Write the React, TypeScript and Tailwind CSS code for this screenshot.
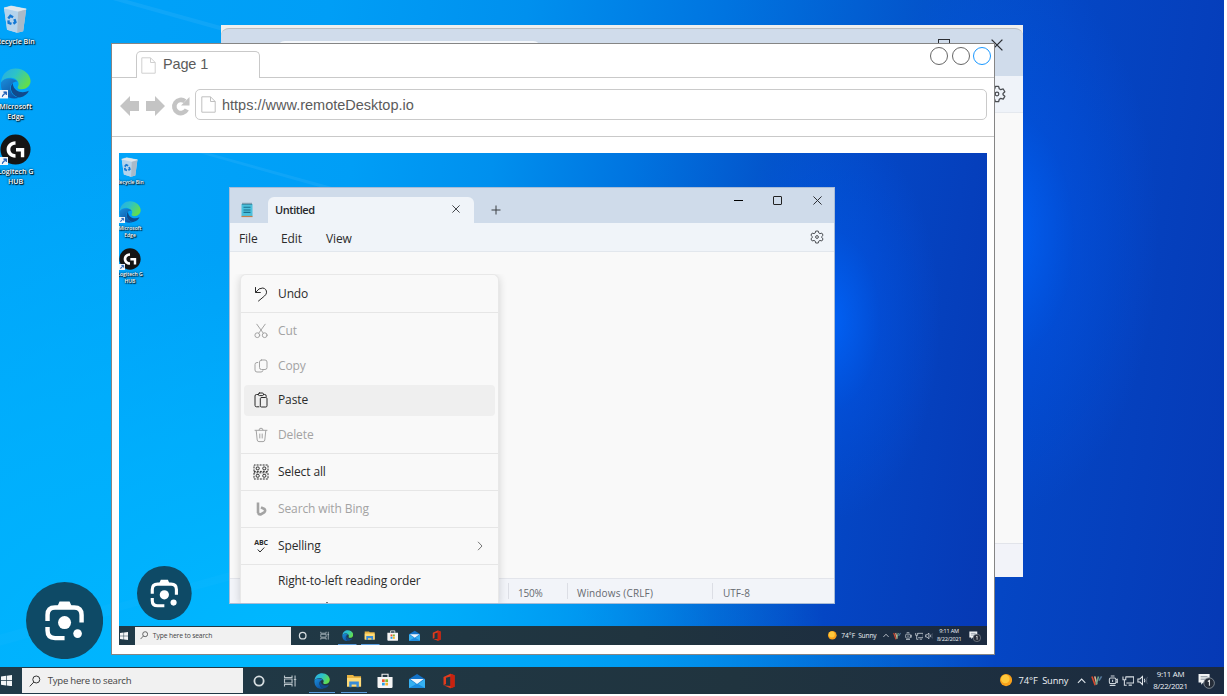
import type { ReactNode } from "react";

/* Sizes inside <Desktop> are in em, so one font size scales the whole desktop. */

function RecycleBin() {
  return (
    <svg viewBox="0 0 24 28" className="block h-[2em] w-[1.72em]">
      <path d="M1 3 L8 1 L23 4 L20 26 L14 27.5 L4 24.5 Z" fill="#c9d9e6" />
      <path d="M1 3 L15 6 L14 27.5 L4 24.5 Z" fill="#b4d3ec" />
      <path d="M15 6 L23 4 L20 26 L14 27.5 Z" fill="#a9bac9" />
      <path d="M1 3 L8 1 L23 4 L15 6.2 Z" fill="#dfe6eb" stroke="#e6edf2" strokeWidth="0.6" />
      <g fill="none" stroke="#1478d4" strokeWidth="2.4">
        <path d="M5.2 13.5 L7.3 10.8 L10 12.2" />
        <path d="M11.3 14 L12.3 17 L10.3 18.6" />
        <path d="M8.4 18.8 L5.6 17.8 L5.4 15.2" />
      </g>
    </svg>
  );
}

function EdgeLogo({ id, className }: { id: string; className: string }) {
  return (
    <svg viewBox="0 0 32 32" className={className}>
      <defs>
        <linearGradient id={id + "a"} x1="0" y1="0" x2="1" y2="0.5">
          <stop offset="0" stopColor="#2aa9e6" />
          <stop offset="0.5" stopColor="#2cc3c9" />
          <stop offset="1" stopColor="#62dd4e" />
        </linearGradient>
        <linearGradient id={id + "b"} x1="0" y1="0" x2="0.7" y2="1">
          <stop offset="0" stopColor="#1b8fdc" />
          <stop offset="1" stopColor="#0c50a0" />
        </linearGradient>
      </defs>
      <path d="M1 15 C2 5 9 0.5 16 0.5 C25 0.5 31.5 7 31.5 13.5 C31.5 19 27 22 22.5 22 C19 22 17.5 20.7 18.5 19 C20.5 16 18.5 11 12 10 C7 9.6 3 11.5 1 15 Z" fill={"url(#" + id + "a)"} />
      <path d="M1 15 C4 10.5 9 10.5 12 11 C16 11.8 17.5 13 18 14 C13 14 9.5 17.5 11 23 C12 27.5 16 30.5 20 30.8 C8 34 0 26 1 15 Z" fill={"url(#" + id + "b)"} />
      <path d="M13 15.5 C8.5 21 13 30 20.5 30.5 C25.5 29.5 28.5 26.5 29.8 23.5 C24 26.5 14 25.5 13 15.5 Z" fill="#114a8b" />
    </svg>
  );
}

function LogitechLogo() {
  return (
    <svg viewBox="0 0 32 32" className="block h-[2.2em] w-[2.2em]">
      <circle cx="16" cy="16" r="15.5" fill="#151515" />
      <path d="M16 7.5 C10.5 7.5 6.8 11.3 6.8 16 C6.8 20.7 10.5 24.5 16 24.5 V20.8 C12.8 20.8 10.7 18.8 10.7 16 C10.7 13.2 12.8 11.2 16 11.2 Z" fill="#fff" />
      <path d="M16.5 14.5 H25 V24 H21.5 V18 H16.5 Z" fill="#fff" />
    </svg>
  );
}

function Shortcut() {
  return (
    <svg viewBox="0 0 9 9" className="absolute bottom-0 left-0 h-[0.6em] w-[0.6em]">
      <rect width="9" height="9" fill="#f2f6fa" />
      <path d="M2.5 7.5 C2.5 5 3.5 4 5.5 4 M3.8 2 H7 V5.2 Z" fill="#2261b8" stroke="#2261b8" strokeWidth="1" />
    </svg>
  );
}

function IconLabel({ children }: { children: ReactNode }) {
  return (
    <span className="text-center text-[0.5em] leading-[1.38em] font-semibold whitespace-nowrap text-white [text-shadow:0_0_2px_#000,1px_1px_1px_#000]">
      {children}
    </span>
  );
}

function Lens() {
  return (
    <svg viewBox="0 0 77 77" className="block h-[5.47em] w-[5.47em]">
      <circle cx="38.5" cy="38.5" r="38.5" fill="#0e4a66" />
      <g fill="none" stroke="#fff" strokeWidth="4.4">
        <path d="M21.5 39 V33 Q21.5 25.5 29 25.5 H48 Q55.5 25.5 55.5 33 V40.5" />
        <path d="M21.5 45 V48.5 Q21.5 56 29 56 H38.5" />
      </g>
      <path d="M31 25 L33.5 19.5 H43.5 L46 25 Z" fill="#fff" />
      <circle cx="38.5" cy="40.5" r="6.5" fill="#fff" />
      <circle cx="51.5" cy="51.5" r="4.3" fill="#fff" />
    </svg>
  );
}

function TaskSlot({ children, active }: { children: ReactNode; active?: boolean }) {
  return (
    <div className={"flex h-full w-[2.245em] items-center justify-center " + (active ? "bg-[linear-gradient(#5a9ee0,#5a9ee0)] bg-[length:1.85em_0.1em] bg-bottom bg-no-repeat" : "")}>
      {children}
    </div>
  );
}

function Taskbar({ id }: { id: string }) {
  const icon = "block h-[1.14em] w-[1.14em]";
  return (
    <div className="flex h-[1.87em] w-full items-center bg-linear-to-r from-[#203a48] via-[#20343f] via-60% to-[#1b2a40]">
      <div className="flex h-full w-[1.56em] items-center">
        <svg viewBox="0 0 12 12" className="ml-[0.06em] block h-[0.8em] w-[0.8em]" fill="#f4f6f7">
          <path d="M0 1.6 L5.4 0.9 V5.6 H0Z M6.1 0.8 L12 0 V5.6 H6.1Z M0 6.3 H5.4 V11.1 L0 10.4Z M6.1 6.3 H12 V12 L6.1 11.2Z" />
        </svg>
      </div>
      <div className="flex h-[1.8em] w-[15.67em] items-center bg-[#f1f1f1]">
        <svg viewBox="0 0 12 12" className="ml-[0.5em] block h-[0.85em] w-[0.85em]" fill="none" stroke="#333" strokeWidth="1">
          <circle cx="7.3" cy="4.5" r="3.5" />
          <path d="M4.8 7.1 L0.8 11.4" />
        </svg>
        <span className="mt-[0.15em] ml-[0.7em] text-[0.68em] leading-none tracking-[-0.025em] whitespace-nowrap text-[#444]">Type here to search</span>
      </div>
      <TaskSlot>
        <svg viewBox="0 0 16 16" className={icon}><circle cx="8" cy="8" r="4.6" fill="none" stroke="#d6dde0" strokeWidth="1.8" /></svg>
      </TaskSlot>
      <TaskSlot>
        <svg viewBox="0 0 16 16" className={icon} fill="none" stroke="#b9c4ca" strokeWidth="1.1">
          <path d="M2.5 2.5 V4.5 H10 V2.5 M2.5 13.5 V11.5 H10 V13.5 M2.5 6 H10 V10 H2.5 Z M13 2.5 V13.5 M11.8 6.5 H14.2" />
        </svg>
      </TaskSlot>
      <TaskSlot active><EdgeLogo id={id + "t"} className={icon} /></TaskSlot>
      <TaskSlot active>
        <svg viewBox="0 0 16 16" className={icon}>
          <path d="M1 2 H7 L8.2 3.3 H15 V13.5 H1 Z" fill="#eab542" />
          <path d="M1 5 H15 V13.5 H1 Z" fill="#ffdb78" />
          <path d="M3.2 8.5 H12.8 V14.2 H10.4 V11.5 H5.6 V14.2 H3.2 Z" fill="#398bd6" />
        </svg>
      </TaskSlot>
      <TaskSlot>
        <svg viewBox="0 0 16 16" className={icon}>
          <path d="M5 4 V1.2 H11 V4" fill="none" stroke="#f3f3f3" strokeWidth="1.1" />
          <path d="M0.5 4 H15.5 V13.8 Q15.5 15 14.3 15 H1.7 Q0.5 15 0.5 13.8 Z" fill="#f5f5f5" />
          <path d="M5 6.3 H7.7 V9 H5Z" fill="#ee5329" />
          <path d="M8.3 6.3 H11 V9 H8.3Z" fill="#7fb62f" />
          <path d="M5 9.7 H7.7 V12.4 H5Z" fill="#2aa0e6" />
          <path d="M8.3 9.7 H11 V12.4 H8.3Z" fill="#f7b52c" />
        </svg>
      </TaskSlot>
      <TaskSlot>
        <svg viewBox="0 0 16 16" className={icon}>
          <path d="M0 6 L8 1 L16 6 V15 H0 Z" fill="#1473c8" />
          <path d="M0 6 L8 11.5 L16 6 V15 H0 Z" fill="#36b1f2" />
          <path d="M0 15 L8 10.5 L16 15 Z" fill="#1b8bdf" />
          <path d="M1.2 6 H14.8 L8 11 Z" fill="#eef6fc" />
        </svg>
      </TaskSlot>
      <TaskSlot>
        <svg viewBox="0 0 16 16" className={icon}>
          <path d="M2.5 4 L9.5 0.8 L13.5 2.2 V13.8 L9.5 15.2 L2.5 12.3 L9.5 13 V3.6 L5 4.8 V11 L2.5 12.2 Z" fill="#e23b1c" />
          <path d="M9.5 0.8 L13.5 2.2 V13.8 L9.5 15.2 Z" fill="#c9220f" />
        </svg>
      </TaskSlot>
      <div className="flex-1" />
      <svg viewBox="0 0 16 16" className="block h-[0.86em] w-[0.86em]">
        <circle cx="8" cy="8" r="8" fill="#f9a11b" />
        <circle cx="7" cy="6.6" r="5.6" fill="#ffc93c" />
      </svg>
      <span className="mt-[0.1em] ml-[0.7em] w-[2.55em] text-[0.66em] leading-none whitespace-nowrap text-[#eef2f6]">74°F</span>
      <span className="mt-[0.1em] w-[3.25em] text-[0.66em] leading-none tracking-[-0.02em] whitespace-nowrap text-[#eef2f6]">Sunny</span>
      <svg viewBox="0 0 12 12" className="ml-[0.25em] block h-[0.7em] w-[0.8em]" fill="none" stroke="#dfe5ea" strokeWidth="1.3">
        <path d="M1.5 8.5 L6 3.8 L10.5 8.5" />
      </svg>
      <svg viewBox="0 0 12 12" className="ml-[0.3em] block h-[0.8em] w-[0.8em]" fill="none" strokeWidth="1.7">
        <path d="M1 1.5 L4.5 11" stroke="#d8472b" />
        <path d="M4 1.5 L6.2 10" stroke="#e8b08c" />
        <path d="M8 1.5 L5.5 10" stroke="#6fa58c" />
        <path d="M11.3 1.5 L8.5 6" stroke="#54789a" />
      </svg>
      <svg viewBox="0 0 12 12" className="ml-[0.3em] block h-[0.8em] w-[0.8em]" fill="none" stroke="#cfd6dd" strokeWidth="1.1">
        <rect x="2.5" y="3.2" width="7" height="6" rx="1.5" />
        <path d="M4 1 H8 M3 11.3 H9" />
        <path d="M6 5 V7.5 M9.5 5 L11 4.5 V8 L9.5 7.5" />
      </svg>
      <svg viewBox="0 0 13 12" className="ml-[0.25em] block h-[0.8em] w-[0.87em]" fill="none" stroke="#d9dfe5" strokeWidth="1.1">
        <path d="M4 2 H12.4 V8.6 H4.6 M1 1.5 V5 H4 V1.5 M2.5 5 V11 H5 M7 10.8 H10.5" />
      </svg>
      <svg viewBox="0 0 13 12" className="ml-[0.18em] block h-[0.78em] w-[0.84em]" fill="none" stroke="#e4e9ee" strokeWidth="1.1">
        <path d="M1 4.3 H3.2 L6 1.5 V10.5 L3.2 7.7 H1 Z M8 4 Q9.2 6 8 8" />
        <path d="M9.8 3 Q11.4 6 9.8 9 M11.6 2 Q13.6 6 11.6 10" stroke="#4c596b" />
      </svg>
      <div className="ml-[0.22em] flex w-[2.7em] flex-col items-center">
        <span className="text-[0.56em] leading-[1.4em] tracking-[-0.04em] whitespace-nowrap text-[#eef2f6]">9:11 AM</span>
        <span className="text-[0.56em] leading-[1.4em] tracking-[-0.04em] whitespace-nowrap text-[#eef2f6]">8/22/2021</span>
      </div>
      <svg viewBox="0 0 16 16" className="mr-[0.62em] ml-[0.62em] block h-[1.2em] w-[1.2em]">
        <path d="M0.5 2 H11 V10 H5 L3 12 V10 H0.5 Z" fill="#f1f3f5" />
        <path d="M2.5 4.5 H9 M2.5 6.8 H9" stroke="#7b8794" strokeWidth="0.9" />
        <circle cx="10.5" cy="10.5" r="5" fill="#252c38" stroke="#8b939d" strokeWidth="0.8" />
        <path d="M9.3 9 L10.8 8 V13" fill="none" stroke="#eee" strokeWidth="1" />
      </svg>
    </div>
  );
}

function Desktop({ id }: { id: string }) {
  return (
    <div className="relative flex h-[49.2em] w-[86.8em] flex-col overflow-hidden bg-[radial-gradient(ellipse_11em_20em_at_82%_34%,#0066ffd0,#0058ee60_45%,#0050e000_100%),radial-gradient(ellipse_55em_40em_at_18%_100%,#00b8ff,#00b6ff90_55%,#00b0ff00_100%),linear-gradient(98deg,#00a4fa_0%,#009ef6_25%,#0090ee_40%,#0074e0_55%,#0354cb_70%,#0446c4_82%,#0639b5_100%)] font-['Open_Sans','Noto_Sans',sans-serif]">
      <svg viewBox="0 0 868 492" className="absolute inset-0 h-full w-full">
        <path d="M90 0 L300 58 V62 L80 0 Z" fill="#fff" opacity="0.06" />
        <path d="M0 450 L500 310 V320 L0 458 Z" fill="#fff" opacity="0.02" />
      </svg>
      <div className="relative flex w-[2.2em] flex-1 flex-col items-center pt-[0.35em]">
        <RecycleBin />
        <div className="flex h-[2.47em] flex-col items-center pt-[0.29em]">
          <IconLabel>Recycle Bin</IconLabel>
        </div>
        <div className="relative">
          <EdgeLogo id={id + "d"} className="block h-[2.2em] w-[2.2em]" />
          <Shortcut />
        </div>
        <div className="flex h-[2.49em] flex-col items-center pt-[0.22em]">
          <IconLabel>Microsoft</IconLabel>
          <IconLabel>Edge</IconLabel>
        </div>
        <div className="relative">
          <LogitechLogo />
          <Shortcut />
        </div>
        <div className="flex flex-col items-center pt-[0.14em]">
          <IconLabel>Logitech G</IconLabel>
          <IconLabel>HUB</IconLabel>
        </div>
      </div>
      <div className="relative mb-[0.6em] ml-[1.83em]">
        <Lens />
      </div>
      <Taskbar id={id} />
    </div>
  );
}

function Gear({ className }: { className: string }) {
  return (
    <svg viewBox="0 0 20 20" className={className} fill="none" stroke="#4a4d52" strokeWidth="1.4" strokeLinejoin="round">
      <path d="M8.2 1.5 H11.8 L12.5 4.2 L14.2 5.2 L16.9 4.4 L18.7 7.5 L16.7 9.4 V10.8 L18.7 12.6 L16.9 15.7 L14.2 14.9 L12.5 15.9 L11.8 18.6 H8.2 L7.5 15.9 L5.8 14.9 L3.1 15.7 L1.3 12.6 L3.3 10.8 V9.4 L1.3 7.5 L3.1 4.4 L5.8 5.2 L7.5 4.2 Z" />
      <circle cx="10" cy="10" r="2" />
    </svg>
  );
}

function Cross({ className }: { className: string }) {
  return (
    <svg viewBox="0 0 10 10" className={className} fill="none" stroke="#2b2e33" strokeWidth="1.1">
      <path d="M0.5 0.5 L9.5 9.5 M9.5 0.5 L0.5 9.5" />
    </svg>
  );
}

function BackWindow() {
  return (
    <div className="absolute top-[25px] left-[221px] flex h-[552px] w-[802px] flex-col bg-[#efefee] pt-[3px]">
      <div className="flex h-[48px] items-start rounded-t-lg border-t border-[#b9bdc2] bg-[#d0dceb] pt-[10px] pr-5">
        <div className="mt-[2px] ml-[56px] h-[36px] w-[264px] rounded-t-lg bg-[#f4f7fb]" />
        <div className="ml-auto h-3 w-3 border-[1.5px] border-[#2b2e33]" />
        <Cross className="ml-[41px] h-3 w-3" />
      </div>
      <div className="flex h-[37px] items-center justify-end border-b border-[#e4e8ee] bg-[#eff3f9] pr-[17px]">
        <Gear className="h-[18px] w-[18px]" />
      </div>
      <div className="flex-1 bg-[#f9f9f9]" />
      <div className="h-[34px] rounded-br-[3px] border-t border-[#e2e4ea] bg-[#f2f3f9]" />
    </div>
  );
}

function MenuRow({ icon, children, disabled, className }: { icon?: ReactNode; children: ReactNode; disabled?: boolean; className: string }) {
  return (
    <div className={"flex shrink-0 items-center " + className + (disabled ? " text-[#a3a3a3]" : " text-[#2b2b2b]")}>
      <div className="flex w-[37px] justify-start pl-3">
        <div className="flex w-4 justify-center">{icon}</div>
      </div>
      {children}
    </div>
  );
}

const line = { fill: "none", stroke: "currentColor", strokeWidth: 1, strokeLinecap: "round" as const, strokeLinejoin: "round" as const };

function ContextMenu() {
  return (
    <div className="relative ml-[10px] flex h-[329px] w-[259px] flex-col overflow-hidden rounded-t-md border border-b-0 border-[#e8e8e8] bg-[#f9f9f9] text-[12px] tracking-[-0.01em] whitespace-nowrap shadow-[0_2px_8px_rgba(0,0,0,0.16)]">
      <MenuRow className="h-[38px] border-b border-[#e6e6e6]" icon={
        <svg viewBox="0 0 14 16" className="h-4 w-3.5" {...line}><path d="M1.5 1.5 V6.5 H6.3 M1.8 6.2 Q5 1.5 8.8 2 Q12.8 2.8 12.5 6.8 Q12.3 8.3 10.5 10 L4.5 15" /></svg>
      }>Undo</MenuRow>
      <MenuRow disabled className="h-[35px]" icon={
        <svg viewBox="0 0 14 16" className="h-4 w-3.5" {...line}><circle cx="3.3" cy="12.2" r="2.4" /><circle cx="10.7" cy="12.2" r="2.4" /><path d="M2.8 1.2 L9.3 10.2 M11.2 1.2 L4.7 10.2" /></svg>
      }>Cut</MenuRow>
      <MenuRow disabled className="h-[35px]" icon={
        <svg viewBox="0 0 14 14" className="h-3.5 w-3.5" {...line}><rect x="5.5" y="1" width="7.5" height="9.5" rx="2" /><path d="M3.8 3.5 H3 Q1 3.5 1 5.5 V11 Q1 13 3 13 H7 Q8.8 13 9 11.6" /></svg>
      }>Copy</MenuRow>
      <div className="flex h-[34px] shrink-0 items-center px-[3px]">
        <MenuRow className="h-[31px] flex-1 rounded bg-[#efefef]" icon={
          <svg viewBox="0 0 14 16" className="-ml-[6px] h-4 w-3.5" {...line}><path d="M4.3 2.5 H2.5 Q1 2.5 1 4 V13.3 Q1 14.8 2.5 14.8 H5 M9.5 2.5 H10.7 Q12.2 2.5 12.2 4 V4.5" /><rect x="4.3" y="1" width="5.2" height="2.6" rx="1.2" /><rect x="6.3" y="5.5" width="6.7" height="9.5" rx="1.2" /></svg>
        }><span className="-ml-[3px]">Paste</span></MenuRow>
      </div>
      <MenuRow disabled className="h-[37px] border-b border-[#e6e6e6]" icon={
        <svg viewBox="0 0 14 16" className="h-4 w-3.5" {...line}><path d="M1 3.3 H13 M5 3 Q5 1.2 7 1.2 Q9 1.2 9 3 M2.2 3.5 L3.2 13 Q3.4 14.6 5 14.6 H9 Q10.6 14.6 10.8 13 L11.8 3.5 M5.8 7 V11 M8.2 7 V11" /></svg>
      }>Delete</MenuRow>
      <MenuRow className="h-[37px] border-b border-[#e6e6e6]" icon={
        <svg viewBox="0 0 16 16" className="h-4 w-4" {...line} strokeLinecap="butt">
          <g strokeDasharray="2 1"><path d="M1 7.4 V1 H15 V7.4 Z M1 8.8 V15 H15 V8.8 Z" /></g>
          <rect x="3.2" y="3" width="3" height="2.8" rx="1" /><rect x="9.8" y="3" width="3" height="2.8" rx="1" />
          <rect x="3.2" y="10.4" width="3" height="2.8" rx="1" /><rect x="9.8" y="10.4" width="3" height="2.8" rx="1" />
        </svg>
      }>Select all</MenuRow>
      <MenuRow disabled className="h-[37px] border-b border-[#e6e6e6]" icon={
        <svg viewBox="0 0 11 14" className="h-3.5 w-[11px]" fill="none" stroke="#a3a3a3" strokeWidth="2.6" strokeLinejoin="round">
          <path d="M2 0.4 V11" />
          <path d="M2 11 Q3 13 5.2 12.2 L8.2 10.4 Q10 8.6 8.4 7 L5 5.4" />
        </svg>
      }>Search with Bing</MenuRow>
      <MenuRow className="h-[37px] border-b border-[#e6e6e6]" icon={
        <span className="flex flex-col items-center">
          <span className="text-[7px] leading-[8px] font-bold">ABC</span>
          <svg viewBox="0 0 8 6" className="h-1.5 w-2" {...line}><path d="M1 2.8 L3 5 L7 0.8" /></svg>
        </span>
      }>
        <span className="flex-1">Spelling</span>
        <svg viewBox="0 0 6 10" className="mr-[15px] h-2.5 w-1.5" fill="none" stroke="#777" strokeWidth="1"><path d="M1 0.8 L5 5 L1 9.2" /></svg>
      </MenuRow>
      <MenuRow className="h-[31px]">Right-to-left reading order</MenuRow>
      <div className="mt-auto mr-auto ml-[85px] h-px w-[2px] bg-[#777]" />
    </div>
  );
}

function Notepad() {
  return (
    <div className="absolute top-[34px] left-[110px] flex h-[417px] w-[606px] flex-col border border-[#a9bcd6] bg-[#f9f9f9] font-['Open_Sans','Noto_Sans',sans-serif]">
      <div className="flex h-[35px] shrink-0 bg-[#cfdbea]">
        <div className="flex w-[38px] items-center pt-2 pl-[11px]">
          <svg viewBox="0 0 12 16" className="h-4 w-3">
            <rect x="0.5" y="2" width="11" height="12.5" fill="#4cc0dc" />
            <path d="M0.5 14.5 H11.5" stroke="#c87f4a" strokeWidth="1.2" />
            <path d="M2 0.8 V3 M4 0.8 V3 M6 0.8 V3 M8 0.8 V3 M10 0.8 V3" stroke="#285b73" strokeWidth="0.9" />
            <path d="M2.5 5.2 H9.5 M2.5 8 H9.5 M2.5 10.4 H9.5" stroke="#1a6f8e" strokeWidth="1.1" />
          </svg>
        </div>
        <div className="mt-[9px] flex w-[206px] items-center rounded-t-md bg-[#f0f4f9] pr-[14px] pl-[7px]">
          <span className="-mt-px flex-1 text-[11px] leading-none font-semibold tracking-[-0.04em] text-[#26282b]">Untitled</span>
          <Cross className="-mt-[2px] h-2 w-2" />
        </div>
        <svg viewBox="0 0 10 10" className="mt-[17px] ml-[17px] h-[10px] w-[10px]" stroke="#3b3e42" strokeWidth="1"><path d="M5 0.5 V9.5 M0.5 5 H9.5" /></svg>
        <div className="ml-auto flex items-start pt-2 pr-[12px]">
          <div className="mt-[4px] h-px w-[9px] bg-black" />
          <div className="ml-[30px] h-[9px] w-[9px] rounded-[1px] border border-[#222]" />
          <Cross className="ml-[31px] h-[9px] w-[9px]" />
        </div>
      </div>
      <div className="flex h-[29px] shrink-0 items-center border-b border-[#e2e7ed] bg-[#f0f4f9] pr-[10px] pl-[9px] text-[12px] tracking-[-0.01em] text-[#2b2b2b]">
        <span className="w-[42px] pt-[3px]">File</span>
        <span className="w-[45px] pt-[3px]">Edit</span>
        <span className="pt-[3px]">View</span>
        <Gear className="ml-auto h-[14px] w-[14px]" />
      </div>
      <div className="flex-1" />
      <div className="flex h-[25px] shrink-0 border-t border-[#e3e5eb] bg-[#f2f4f9] py-1 pl-[278px] text-[10px] text-[#666a70]">
        <span className="flex w-[59px] items-center border-l border-[#dcdee5] pt-1 pl-[9px] tracking-[-0.02em]">150%</span>
        <span className="flex w-[145px] items-center border-l border-[#dcdee5] pt-1 pl-[9px] tracking-[0.015em]">Windows (CRLF)</span>
        <span className="flex items-center border-l border-[#dcdee5] pt-1 pl-[10px]">UTF-8</span>
      </div>
      <div className="absolute top-[86px] left-0 overflow-hidden pr-2">
        <ContextMenu />
      </div>
    </div>
  );
}

function PageIcon({ className, color }: { className: string; color: string }) {
  return (
    <svg viewBox="0 0 15 17" className={className} fill="none" stroke={color}>
      <path d="M0.8 0.8 H9.5 L14.2 5.5 V16.2 H0.8 Z M9.5 0.8 V5.5 H14.2" />
    </svg>
  );
}

function Browser() {
  return (
    <div className="absolute top-[43px] left-[111px] flex h-[612px] w-[884px] flex-col border border-[#858585] bg-white font-['Liberation_Sans',Arial,sans-serif] text-[#5b5b5b]">
      <div className="flex h-[34px] shrink-0">
        <div className="w-[24px] border-b border-[#c9c9c9]" />
        <div className="mt-[7px] flex w-[124px] items-center rounded-t-[5px] border border-b-0 border-[#c9c9c9] pl-[4px]">
          <PageIcon className="h-[17px] w-[15px]" color="#d0d0d0" />
          <span className="-mt-[2px] ml-[7px] text-[14.5px] leading-none tracking-[-0.01em]">Page 1</span>
        </div>
        <div className="flex flex-1 justify-end gap-[3.5px] border-b border-[#c9c9c9] pt-[3px] pr-[3px]">
          <div className="h-[18px] w-[18px] rounded-full border border-[#666]" />
          <div className="h-[18px] w-[18px] rounded-full border border-[#666]" />
          <div className="h-[18px] w-[18px] rounded-full border border-[#1a98ff]" />
        </div>
      </div>
      <div className="flex h-[59px] shrink-0 border-b border-[#c9c9c9] pt-[11px] pl-2">
        <svg viewBox="0 0 72 30" className="h-[30px] w-[72px]" fill="#c4c4c4">
          <path d="M0 17 L10 7 V12 H19 V22 H10 V27 Z" />
          <path d="M45 17 L35 7 V12 H26 V22 H35 V27 Z" />
          <path d="M66.8 20.5 A6.6 6.6 0 1 1 65 12.3" fill="none" stroke="#c4c4c4" strokeWidth="4.6" />
          <path d="M69.5 8 V16.5 H61 Z" />
        </svg>
        <div className="ml-[3px] flex h-[31px] w-[792px] items-center rounded-[5px] border border-[#cacaca] pl-[5px]">
          <PageIcon className="h-[17px] w-[15px]" color="#c0c0c0" />
          <span className="mt-[2px] ml-[6px] text-[14.5px] leading-none">https://www.remoteDesktop.io</span>
        </div>
      </div>
      <div className="relative mt-[16px] ml-[7px] w-[868px] text-[10px]">
        <Desktop id="remote" />
        <Notepad />
      </div>
    </div>
  );
}

export default function App() {
  return (
    <div className="relative h-[696px] w-[1227px] overflow-hidden bg-white">
      <div className="text-[14.1px]">
        <Desktop id="host" />
      </div>
      <BackWindow />
      <Browser />
    </div>
  );
}
